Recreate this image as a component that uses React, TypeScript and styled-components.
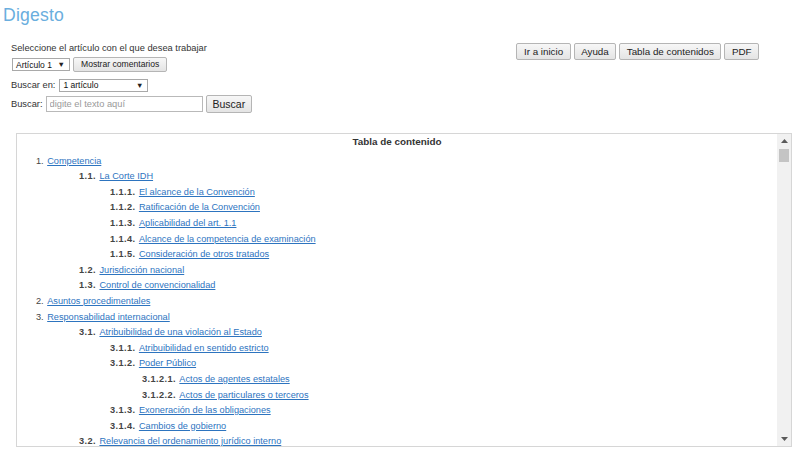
import React from "react";
import styled, { createGlobalStyle } from "styled-components";

const GlobalStyle = createGlobalStyle`
  body {
    margin: 0;
    background: #ffffff;
    font-family: "Liberation Sans", Arial, sans-serif;
    color: #333333;
  }
`;

const Page = styled.div`
  width: 800px;
  height: 467px;
  overflow: hidden;
`;

const Title = styled.h1`
  margin: 0;
  padding: 5px 0 0 3px;
  font-size: 17.6px;
  line-height: 20px;
  letter-spacing: 0.2px;
  font-weight: 400;
  color: #6aaede;
`;

const TopSection = styled.div`
  display: flex;
  justify-content: space-between;
  align-items: flex-start;
  margin-top: 17px;
  padding: 0 41px 0 11px;
`;

const FormColumn = styled.div`
  display: flex;
  flex-direction: column;
  font-size: 9.3px;
`;

const Prompt = styled.div`
  line-height: 12px;
  height: 12px;
`;

const Row = styled.div<{ $top: number; $height: number }>`
  display: flex;
  align-items: center;
  gap: 3px;
  margin-top: ${(p) => p.$top}px;
  height: ${(p) => p.$height}px;
`;

const Label = styled.span`
  line-height: 12px;
`;

const FakeSelect = styled.div<{ $width: number; $height: number }>`
  display: flex;
  align-items: center;
  justify-content: space-between;
  box-sizing: border-box;
  width: ${(p) => p.$width}px;
  height: ${(p) => p.$height}px;
  margin-left: 1px;
  padding: 0 4px 0 3px;
  border: 1px solid #a9a9a9;
  background: #ffffff;
  font-size: 8.5px;
  color: #111111;
`;

const Caret = styled.span`
  font-size: 7.5px;
  color: #222222;
`;

const Button = styled.button<{ $size: number; $height: number; $pad: number }>`
  box-sizing: border-box;
  height: ${(p) => p.$height}px;
  padding: 0 ${(p) => p.$pad}px;
  margin: 0;
  border: 1px solid #b5b5b5;
  border-radius: 2px;
  background: linear-gradient(#f7f7f7, #e4e4e4);
  font-family: "Liberation Sans", Arial, sans-serif;
  font-size: ${(p) => p.$size}px;
  color: #222222;
  line-height: 1;
  white-space: nowrap;
`;

const SearchInput = styled.input`
  box-sizing: border-box;
  width: 157px;
  height: 16px;
  margin: 0;
  padding: 0 3px;
  border: 1px solid #b9b9b9;
  font-family: "Liberation Sans", Arial, sans-serif;
  font-size: 9.3px;
  &::placeholder {
    color: #9a9a9a;
  }
`;

const NavButtons = styled.div`
  display: flex;
  gap: 3px;
  margin-top: 1px;
`;

const TocBox = styled.div`
  display: flex;
  box-sizing: border-box;
  height: 314px;
  margin: 20px 8px 0 16px;
  border: 1px solid #d6d6d6;
`;

const TocContent = styled.div`
  flex: 1;
  overflow: hidden;
`;

const TocHeader = styled.div`
  text-align: center;
  font-weight: 700;
  font-size: 9.9px;
  line-height: 15.6px;
  color: #333333;
`;

const TocList = styled.ul`
  list-style: none;
  margin: 4px 0 0;
  padding: 0;
`;

const TocItem = styled.li<{ $indent: number }>`
  padding-left: ${(p) => p.$indent}px;
  font-size: 9.2px;
  line-height: 15.6px;
  white-space: nowrap;
`;

const ItemNumber = styled.span<{ $bold: boolean }>`
  margin-right: 3.5px;
  color: #444444;
  font-weight: ${(p) => (p.$bold ? 700 : 400)};
  letter-spacing: ${(p) => (p.$bold ? "0.4px" : "0")};
`;

const ItemLink = styled.a`
  color: #2d74bf;
  text-decoration: underline;
`;

const Scrollbar = styled.div`
  display: flex;
  flex-direction: column;
  width: 14px;
  background: #f1f1f1;
`;

const ScrollArrow = styled.div`
  display: flex;
  align-items: center;
  justify-content: center;
  height: 14px;
`;

const ScrollThumb = styled.div`
  height: 13px;
  margin: 1px 2px 0;
  background: #c4c4c4;
`;

const ScrollTrack = styled.div`
  flex: 1;
`;

const indents = [0, 19, 62, 93, 125];

const toc = [
  { lvl: 1, num: "1.", text: "Competencia" },
  { lvl: 2, num: "1.1.", text: "La Corte IDH" },
  { lvl: 3, num: "1.1.1.", text: "El alcance de la Convención" },
  { lvl: 3, num: "1.1.2.", text: "Ratificación de la Convención" },
  { lvl: 3, num: "1.1.3.", text: "Aplicabilidad del art. 1.1" },
  { lvl: 3, num: "1.1.4.", text: "Alcance de la competencia de examinación" },
  { lvl: 3, num: "1.1.5.", text: "Consideración de otros tratados" },
  { lvl: 2, num: "1.2.", text: "Jurisdicción nacional" },
  { lvl: 2, num: "1.3.", text: "Control de convencionalidad" },
  { lvl: 1, num: "2.", text: "Asuntos procedimentales" },
  { lvl: 1, num: "3.", text: "Responsabilidad internacional" },
  { lvl: 2, num: "3.1.", text: "Atribuibilidad de una violación al Estado" },
  { lvl: 3, num: "3.1.1.", text: "Atribuibilidad en sentido estricto" },
  { lvl: 3, num: "3.1.2.", text: "Poder Público" },
  { lvl: 4, num: "3.1.2.1.", text: "Actos de agentes estatales" },
  { lvl: 4, num: "3.1.2.2.", text: "Actos de particulares o terceros" },
  { lvl: 3, num: "3.1.3.", text: "Exoneración de las obligaciones" },
  { lvl: 3, num: "3.1.4.", text: "Cambios de gobierno" },
  { lvl: 2, num: "3.2.", text: "Relevancia del ordenamiento jurídico interno" },
];

function Arrow({ up }: { up: boolean }) {
  return (
    <svg width="7" height="4" viewBox="0 0 7 4">
      <polygon points={up ? "0,4 7,4 3.5,0" : "0,0 7,0 3.5,4"} fill="#5a5a5a" />
    </svg>
  );
}

export default function App() {
  return (
    <Page>
      <GlobalStyle />
      <Title>Digesto</Title>
      <TopSection>
        <FormColumn>
          <Prompt>Seleccione el artículo con el que desea trabajar</Prompt>
          <Row $top={3} $height={15}>
            <FakeSelect $width={58} $height={13}>
              Artículo 1 <Caret>▼</Caret>
            </FakeSelect>
            <Button $size={8.6} $height={15} $pad={7}>
              Mostrar comentarios
            </Button>
          </Row>
          <Row $top={6} $height={14}>
            <Label>Buscar en:</Label>
            <FakeSelect $width={89} $height={13}>
              1 artículo <Caret>▼</Caret>
            </FakeSelect>
          </Row>
          <Row $top={3} $height={18}>
            <Label>Buscar:</Label>
            <SearchInput placeholder="digite el texto aquí" />
            <Button $size={10.5} $height={18} $pad={6}>
              Buscar
            </Button>
          </Row>
        </FormColumn>
        <NavButtons>
          <Button $size={9.8} $height={17} $pad={6.5}>
            Ir a inicio
          </Button>
          <Button $size={9.8} $height={17} $pad={6.5}>
            Ayuda
          </Button>
          <Button $size={9.8} $height={17} $pad={6.5}>
            Tabla de contenidos
          </Button>
          <Button $size={9.8} $height={17} $pad={6.5}>
            PDF
          </Button>
        </NavButtons>
      </TopSection>
      <TocBox>
        <TocContent>
          <TocHeader>Tabla de contenido</TocHeader>
          <TocList>
            {toc.map((item) => (
              <TocItem key={item.num} $indent={indents[item.lvl]}>
                <ItemNumber $bold={item.lvl > 1}>{item.num}</ItemNumber>
                <ItemLink href="#">{item.text}</ItemLink>
              </TocItem>
            ))}
          </TocList>
        </TocContent>
        <Scrollbar>
          <ScrollArrow>
            <Arrow up />
          </ScrollArrow>
          <ScrollThumb />
          <ScrollTrack />
          <ScrollArrow>
            <Arrow up={false} />
          </ScrollArrow>
        </Scrollbar>
      </TocBox>
    </Page>
  );
}
